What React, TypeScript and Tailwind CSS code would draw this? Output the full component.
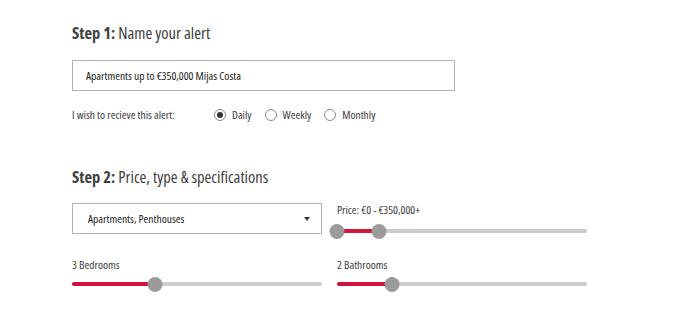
import React from "react";

function Knob({ className }: { className: string }) {
  return (
    <div className={`absolute top-[0.5px] h-[15px] w-[15px] -translate-x-1/2 rounded-full bg-[#9b9b9b] ${className}`} />
  );
}

function Track({ fill, children }: { fill: string; children: React.ReactNode }) {
  return (
    <div className="relative h-4 w-full">
      <div className="absolute left-0 right-0 top-[6px] h-[4px] rounded-full bg-[#cccccc]" />
      <div className={`absolute left-0 top-[6px] h-[4px] rounded-l-full bg-[#d0143c] ${fill}`} />
      {children}
    </div>
  );
}

function Radio({ checked, label }: { checked?: boolean; label: string }) {
  return (
    <label className="flex items-center gap-[6px]">
      <span className="flex h-[12px] w-[12px] items-center justify-center rounded-full border border-[#8a8a8a] bg-white">
        {checked && <span className="h-[6px] w-[6px] rounded-full bg-[#333]" />}
      </span>
      <span>{label}</span>
    </label>
  );
}

export default function App() {
  return (
    <div className="h-[330px] w-[700px] bg-white pl-[72px] pt-[23px] font-['Open_Sans',sans-serif] text-[#3a3a3a] [font-stretch:87.5%]">
      <h2 className="text-[16.5px] leading-[20px] text-[#404040]">
        <span className="font-bold">Step 1:</span> Name your alert
      </h2>
      <div className="mt-[17px] flex h-[31px] w-[383px] items-center border border-[#b3b3b3] pl-[13px] text-[11.5px] text-[#222]">
        Apartments up to €350,000 Mijas Costa
      </div>
      <div className="mt-[16px] flex h-[16px] items-center text-[11.5px]">
        <span className="w-[142px]">I wish to recieve this alert:</span>
        <div className="flex items-center gap-[13px]">
          <Radio checked label="Daily" />
          <Radio label="Weekly" />
          <Radio label="Monthly" />
        </div>
      </div>
      <h2 className="mt-[44px] text-[16.5px] leading-[20px] text-[#404040]">
        <span className="font-bold">Step 2:</span> Price, type &amp; specifications
      </h2>
      <div className="mt-[16px] grid w-[515px] grid-cols-2 gap-x-[15px] text-[11.5px]">
        <div className="flex h-[31px] items-center justify-between border border-[#b3b3b3] pl-[15px] pr-[11px] text-[#222]">
          <span>Apartments, Penthouses</span>
          <span className="h-0 w-0 border-x-[3.5px] border-t-[4px] border-x-transparent border-t-[#333]" />
        </div>
        <div className="flex flex-col">
          <div className="leading-[14px]">Price: €0 - €350,000+</div>
          <div className="mt-[6px]">
            <Track fill="w-[42px]">
              <Knob className="left-0" />
              <Knob className="left-[42px]" />
            </Track>
          </div>
        </div>
        <div className="mt-[19px] flex flex-col">
          <div className="leading-[14px]">3 Bedrooms</div>
          <div className="mt-[4px]">
            <Track fill="w-[83px]">
              <Knob className="left-[83px]" />
            </Track>
          </div>
        </div>
        <div className="mt-[19px] flex flex-col">
          <div className="leading-[14px]">2 Bathrooms</div>
          <div className="mt-[4px]">
            <Track fill="w-[55px]">
              <Knob className="left-[55px]" />
            </Track>
          </div>
        </div>
      </div>
    </div>
  );
}
